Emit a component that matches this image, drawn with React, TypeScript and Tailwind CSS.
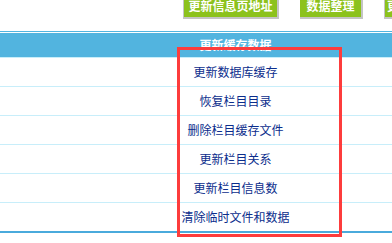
import React from "react";

const items = [
  "更新数据库缓存",
  "恢复栏目目录",
  "删除栏目缓存文件",
  "更新栏目关系",
  "更新栏目信息数",
  "清除临时文件和数据",
];

const App = () => {
  return (
    <div
      className="relative w-[392px] h-[243px] overflow-hidden bg-white"
      style={{ fontFamily: '"Noto Sans CJK SC", "Noto Sans", sans-serif' }}
    >
      <div className="flex h-[19px] pl-[183px] gap-[21px] whitespace-nowrap">
        <div className="w-[96px] h-[19px] bg-[#c4c4c4] pl-px pr-[2px] pb-[2px] shrink-0">
          <div className="h-[17px] bg-[#8cc21c] text-white text-[12px] font-bold leading-[11px] text-center overflow-hidden">
            更新信息页地址
          </div>
        </div>
        <div className="w-[63px] h-[19px] bg-[#c4c4c4] pr-[2px] pb-[2px] shrink-0">
          <div className="h-[17px] bg-[#8cc21c] text-white text-[12px] font-bold leading-[11px] text-center overflow-hidden">
            数据整理
          </div>
        </div>
        <div className="w-[100px] h-[19px] bg-[#c4c4c4] pl-px pb-[2px] shrink-0">
          <div className="h-[17px] bg-[#8cc21c] text-white text-[12px] font-bold leading-[11px] pl-[2px] overflow-hidden">
            更新栏目HTML
          </div>
        </div>
      </div>

      <div className="mt-[12px] border-t border-[#52b4df] pt-px">
        <div className="grid grid-cols-[80px_311px] h-[25px] bg-[#52b4df] border-b border-[#c8eefa]">
          <div></div>
          <div className="text-center text-white text-[12px] font-bold leading-[25px] -translate-y-[1px]">
            更新缓存数据
          </div>
        </div>
        {items.map((t, i) => (
          <div
            key={t}
            className={
              i === items.length - 1
                ? "grid grid-cols-[80px_311px] h-[30px] border-b-2 border-[#4aaadc]"
                : "grid grid-cols-[80px_311px] h-[29px] border-b border-[#c8eefa]"
            }
          >
            <div></div>
            <div className="text-center text-[#0b2d8c] text-[12px] leading-[28px]">{t}</div>
          </div>
        ))}
      </div>

      <div className="absolute left-[177px] top-[47px] w-[165px] h-[190px] border-[3px] border-[#fd3c3c]"></div>
    </div>
  );
};

export default App;
